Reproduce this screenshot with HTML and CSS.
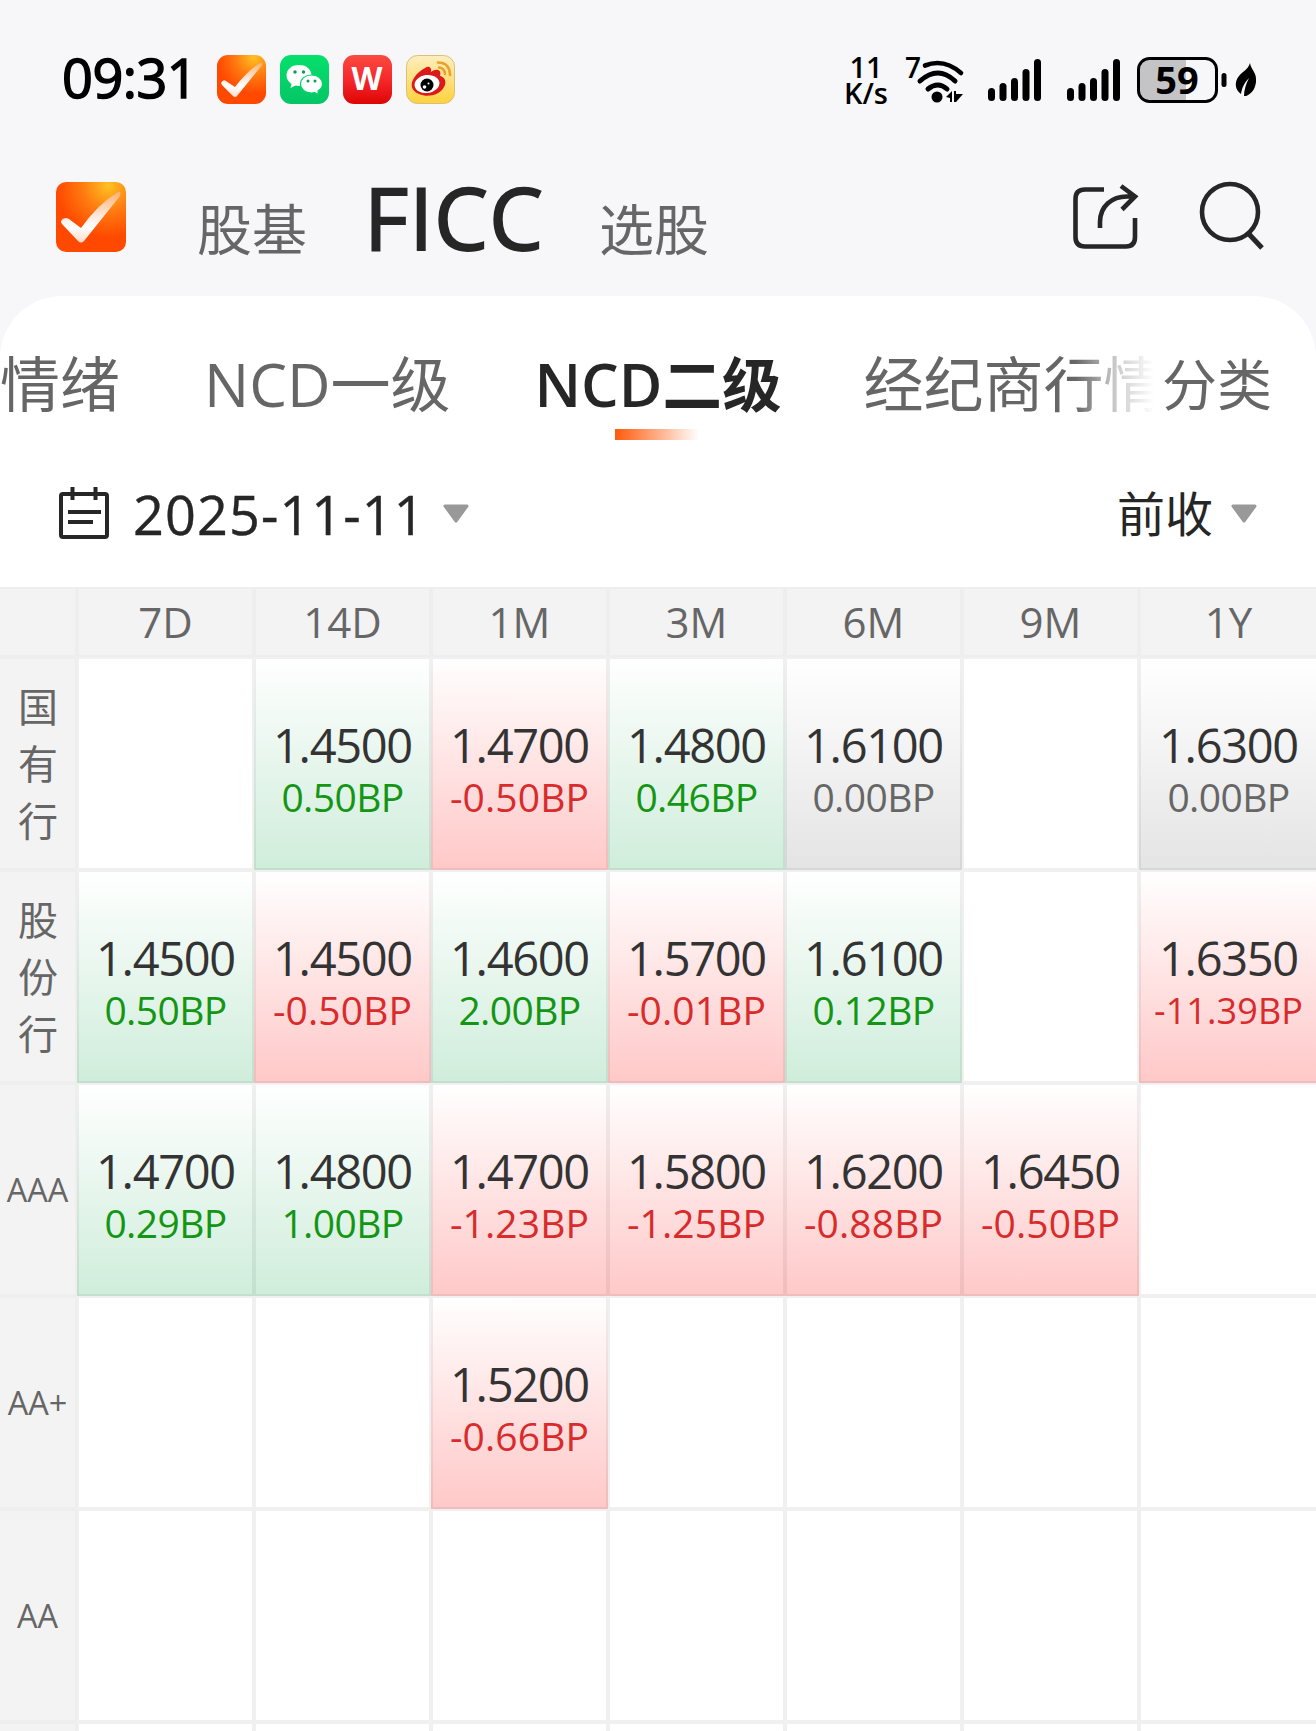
FILE: index.html
```html
<!DOCTYPE html>
<html lang="zh-CN">
<head>
<meta charset="utf-8">
<title>FICC</title>
<link rel="stylesheet" href="styles.css">
</head>
<body>

<svg class="defs" width="0" height="0">
	<defs>
		<radialGradient id="orange" cx="0.75" cy="0.05" r="0.75">
			<stop offset="0" stop-color="#ffc122"/>
			<stop offset="0.5" stop-color="#ff7a10"/>
			<stop offset="1" stop-color="#ff4800"/>
		</radialGradient>
		<linearGradient id="tick" x1="0" y1="0" x2="0" y2="1">
			<stop offset="0" stop-color="#ffb070"/>
			<stop offset="0.45" stop-color="#ffe6d8"/>
			<stop offset="0.7" stop-color="#ffffff"/>
			<stop offset="1" stop-color="#ffd9c8"/>
		</linearGradient>
		<linearGradient id="red" x1="0" y1="0" x2="0" y2="1">
			<stop offset="0" stop-color="#fb4a42"/>
			<stop offset="0.5" stop-color="#f6282c"/>
			<stop offset="1" stop-color="#dd0505"/>
		</linearGradient>
		<linearGradient id="green" x1="0" y1="0" x2="0" y2="1">
			<stop offset="0" stop-color="#06e06c"/>
			<stop offset="1" stop-color="#05c566"/>
		</linearGradient>
		<linearGradient id="yellow" x1="0" y1="0" x2="0" y2="1">
			<stop offset="0" stop-color="#fdeec0"/>
			<stop offset="1" stop-color="#ffd23c"/>
		</linearGradient>
		<symbol id="logo" viewBox="0 0 70 70">
			<rect width="70" height="70" rx="10" fill="url(#orange)"/>
			<path d="M5 39 Q8 34 13 37 L25 46 Q42 22 62 10 Q65 9 64 14 L28 59 Q25 62 22 59 L6 42 Q5 41 5 39 Z" fill="url(#tick)"/>
		</symbol>
		<symbol id="bars" viewBox="0 0 54 42">
			<rect x="0" y="29" width="7" height="13" rx="3.5"/>
			<rect x="11.5" y="24" width="7" height="18" rx="3.5"/>
			<rect x="23" y="19" width="7" height="23" rx="3.5"/>
			<rect x="34.5" y="10" width="7" height="32" rx="3.5"/>
			<rect x="46" y="0" width="7" height="42" rx="3.5"/>
		</symbol>
	</defs>
</svg>

<div class="status">
	<span class="time">09:31</span>
	<div class="apps">
		<svg width="49" height="49" viewBox="0 0 49 49">
			<rect width="49" height="49" rx="11" fill="url(#orange)"/>
			<path d="M4 28 Q6 24 9 26 L18 32 Q30 16 43 8 Q46 7 45 10 L20 41 Q18 43 16 41 L5 30 Z" fill="url(#tick)"/>
		</svg>
		<svg width="49" height="49" viewBox="0 0 49 49">
			<rect width="49" height="49" rx="11" fill="url(#green)"/>
			<path d="M19 10 C11 10 6.500 15 6.500 20.500 C6.500 24 8.500 27 11.500 29 L10.500 33 L15.500 30.500 L19 31 C27 31 31.500 26 31.500 20.500 C31.500 15 27 10 19 10 Z" fill="#fff"/>
			<path d="M31.500 20 C25 20 20.500 24 20.500 29 C20.500 34 25 38 31.500 38 L34.500 37.500 L38.500 39.500 L38 36 C41 34 42.500 32 42.500 29 C42.500 24 38 20 31.500 20 Z" fill="#fff" stroke="#05d069" stroke-width="1.200"/>
			<g fill="#0a9c52"><circle cx="15" cy="17" r="1.700"/><circle cx="23.500" cy="17" r="1.700"/><circle cx="28" cy="26" r="1.500"/><circle cx="35" cy="26" r="1.500"/></g>
		</svg>
		<svg width="49" height="49" viewBox="0 0 49 49">
			<rect width="49" height="49" rx="11" fill="url(#red)"/>
			<text class="wps" x="24" y="35" text-anchor="middle">W</text>
		</svg>
		<svg width="49" height="49" viewBox="0 0 49 49">
			<rect x="0.500" y="0.500" width="48" height="48" rx="11" fill="url(#yellow)" stroke="#d9c078"/>
			<path d="M19 13 C23 10 26 13 25 17 C30 13 36 14 34 21 C39 22 41 27 38 32 C34 40 22 43 13 39 C5 36 4 29 8 23 C11 18 15 15 19 13 Z" fill="#dc1a1c"/>
			<ellipse cx="21" cy="29" rx="12.500" ry="9" fill="#fff" transform="rotate(-8 21 29)"/>
			<circle cx="21" cy="30" r="6.500"/>
			<circle cx="18.500" cy="32" r="1.800" fill="#fff"/><circle cx="22.500" cy="28.500" r="1" fill="#fff"/>
			<path d="M33 12.500 Q38.500 13 39 19 M32 7.500 Q43.500 7.500 44 20" fill="none" stroke="#e9a12f" stroke-width="2.600" stroke-linecap="round"/>
		</svg>
	</div>
	<div class="signals">
		<div class="speed"><span>11</span><span>K/s</span></div>
		<svg class="wifi" width="60" height="48" viewBox="0 0 60 48">
			<text class="gen" x="-1" y="22">7</text>
			<g fill="none" stroke="#000" stroke-width="5">
				<path d="M19 9.500 Q38 2 55 17" stroke-linecap="round" stroke-width="4.600"/>
				<path d="M14 25 Q32 9 49 25" stroke-linecap="round"/>
				<path d="M22 33 Q32 25 41 33" stroke-linecap="round"/>
			</g>
			<circle cx="31" cy="41" r="5.500"/>
			<path d="M40 41 L46 35 L46 46 L44 46 L44 42 Z M48 35 L50 35 L50 38 L57 38 L50 46 L48 46 Z"/>
		</svg>
		<svg class="cell-a" width="54" height="42"><use href="#bars"/></svg>
		<svg class="cell-b" width="54" height="42"><use href="#bars"/></svg>
		<svg class="battery" width="90" height="46" viewBox="0 0 90 46">
			<path d="M49 3 H14 Q3 3 3 14 V32 Q3 43 14 43 H49 Z" fill="#c4c4c6"/>
			<rect x="1.500" y="1.500" width="78" height="43" rx="11" fill="none" stroke="#000" stroke-width="3"/>
			<rect x="84.500" y="16" width="5" height="14" rx="2.500"/>
			<text class="level" x="40" y="37" text-anchor="middle">59</text>
		</svg>
		<svg class="leaf" width="22" height="36" viewBox="0 0 22 36">
			<path d="M15 1 C16 8 22 10 21 20 C20 28 16 32 11 34 L9 34 C9 28 11 22 14 16 C9 21 7 26 6 32 C0 28 -1 20 4 14 C8 9 13 8 15 1 Z"/>
		</svg>
	</div>
</div>

<div class="header">
	<svg class="logo" width="70" height="70"><use href="#logo"/></svg>
	<div class="nav">
		<span class="nav-item">股基</span>
		<span class="nav-item current">FICC</span>
		<span class="nav-item">选股</span>
	</div>
	<svg class="share" width="66" height="66" viewBox="0 0 66 66" fill="none" stroke="#262626" stroke-width="4.600">
		<path d="M31 5.500 H12 Q2.500 5.500 2.500 15 V53 Q2.500 62.500 12 62.500 H53 Q62 62.500 62 53 V34"/>
		<path d="M27 44 V38 C27 22 39 12.500 54 12.500 H61 M48 2 L62 12.500 L49 25.500"/>
	</svg>
	<svg class="search" width="66" height="70" viewBox="0 0 66 70" fill="none" stroke="#262626" stroke-width="4.600">
		<circle cx="31" cy="31" r="28"/>
		<path d="M49 52 L63 67" stroke-width="5"/>
	</svg>
</div>

<div class="panel">
	<div class="tabs">
		<div class="scroller">
			<span class="tab">情绪</span>
			<span class="tab">NCD一级</span>
			<span class="tab active">NCD二级</span>
			<span class="tab">经纪商行情</span>
		</div>
		<span class="more">分类</span>
	</div>

	<div class="filter">
		<svg width="50" height="52" viewBox="0 0 50 52" fill="none" stroke="#262626" stroke-width="4">
			<rect x="2" y="7" width="46" height="43" rx="2"/>
			<path d="M13.500 0 V13 M36.500 0 V13 M9 25 H42 M9 35 H34"/>
		</svg>
		<span class="date">2025-11-11</span>
		<svg class="arrow" width="28" height="20" viewBox="0 0 28 20"><path d="M3 2 H25 L14 17 Z"/></svg>
		<span class="base">前收</span>
		<svg class="arrow" width="28" height="20" viewBox="0 0 28 20"><path d="M3 2 H25 L14 17 Z"/></svg>
	</div>

	<div class="grid">
		<div class="th"></div>
		<div class="th">7D</div>
		<div class="th">14D</div>
		<div class="th">1M</div>
		<div class="th">3M</div>
		<div class="th">6M</div>
		<div class="th">9M</div>
		<div class="th">1Y</div>

		<div class="name cn">国有行</div>
		<div class="td"></div>
		<div class="td up"><b>1.4500</b><i>0.50BP</i></div>
		<div class="td down"><b>1.4700</b><i>-0.50BP</i></div>
		<div class="td up"><b>1.4800</b><i>0.46BP</i></div>
		<div class="td flat"><b>1.6100</b><i>0.00BP</i></div>
		<div class="td"></div>
		<div class="td flat"><b>1.6300</b><i>0.00BP</i></div>

		<div class="name cn">股份行</div>
		<div class="td up"><b>1.4500</b><i>0.50BP</i></div>
		<div class="td down"><b>1.4500</b><i>-0.50BP</i></div>
		<div class="td up"><b>1.4600</b><i>2.00BP</i></div>
		<div class="td down"><b>1.5700</b><i>-0.01BP</i></div>
		<div class="td up"><b>1.6100</b><i>0.12BP</i></div>
		<div class="td"></div>
		<div class="td down"><b>1.6350</b><i class="long">-11.39BP</i></div>

		<div class="name">AAA</div>
		<div class="td up"><b>1.4700</b><i>0.29BP</i></div>
		<div class="td up"><b>1.4800</b><i>1.00BP</i></div>
		<div class="td down"><b>1.4700</b><i>-1.23BP</i></div>
		<div class="td down"><b>1.5800</b><i>-1.25BP</i></div>
		<div class="td down"><b>1.6200</b><i>-0.88BP</i></div>
		<div class="td down"><b>1.6450</b><i>-0.50BP</i></div>
		<div class="td"></div>

		<div class="name">AA+</div>
		<div class="td"></div>
		<div class="td"></div>
		<div class="td down"><b>1.5200</b><i>-0.66BP</i></div>
		<div class="td"></div>
		<div class="td"></div>
		<div class="td"></div>
		<div class="td"></div>

		<div class="name">AA</div>
		<div class="td"></div>
		<div class="td"></div>
		<div class="td"></div>
		<div class="td"></div>
		<div class="td"></div>
		<div class="td"></div>
		<div class="td"></div>

		<div class="name"></div>
		<div class="td"></div>
		<div class="td"></div>
		<div class="td"></div>
		<div class="td"></div>
		<div class="td"></div>
		<div class="td"></div>
		<div class="td"></div>
	</div>
</div>

</body>
</html>
```
FILE: styles.css
```css
* {
	box-sizing: border-box;
}

body {
	margin: 0;
	width: 1316px;
	height: 1731px;
	overflow: hidden;
	background: #f7f7fa;
	color: #262626;
	font-family: "Open Sans", "Noto Sans CJK SC", sans-serif;
	white-space: nowrap;
}

svg {
	display: block;
	flex: none;
	overflow: visible;
}

.defs {
	position: absolute;
}

/* status bar */

.status {
	display: flex;
	align-items: center;
	height: 159px;
	padding-left: 62px;
	color: #000;
}

.time {
	width: 155px;
	font-size: 54px;
	line-height: 80px;
	letter-spacing: -0.5px;
	margin-top: -5px;
	-webkit-text-stroke: 1.5px #000;
}

.apps {
	display: flex;
	gap: 14px;
}

.wps {
	font-family: "Open Sans", sans-serif;
	font-size: 32px;
	font-weight: 700;
	fill: #fff;
}

.signals {
	display: flex;
	align-items: center;
	margin-left: 388px;
}

.speed {
	display: flex;
	flex-direction: column;
	align-items: center;
	width: 46px;
	font-size: 29px;
	font-weight: 600;
	line-height: 26px;
}

.wifi {
	margin-left: 17px;
}

.gen {
	font-size: 28px;
	font-weight: 600;
}

.cell-a {
	margin-left: 22px;
}

.cell-b {
	margin-left: 25px;
}

.battery {
	margin-left: 16px;
}

.level {
	font-size: 38px;
	font-weight: 700;
}

.leaf {
	margin-left: 8px;
}

/* app header */

.header {
	display: flex;
	align-items: center;
	height: 137px;
	padding: 0 51px 21px 56px;
}

.nav {
	display: flex;
	align-items: baseline;
	flex: 1;
	margin: 12px 0 0 71px;
}

.nav-item {
	font-size: 55px;
	line-height: 116px;
	color: #666;
}

.current {
	width: 175px;
	margin: 0 60px 0 57px;
	font-size: 86px;
	letter-spacing: 0.8px;
	color: #262626;
	-webkit-text-stroke: 1.8px #262626;
}

.search {
	margin: -3px 0 0 60px;
}

/* white sheet */

.panel {
	height: 1435px;
	padding-top: 38px;
	background: #fff;
	border-radius: 62px 62px 0 0;
}

.tabs {
	display: flex;
	height: 106px;
	line-height: 100px;
	color: #666;
}

.scroller {
	display: flex;
	width: 1156px;
	overflow: hidden;
	font-size: 60px;
	-webkit-mask-image: linear-gradient(90deg, #000 1075px, rgba(0, 0, 0, 0.35) 1115px, transparent 1154px);
	mask-image: linear-gradient(90deg, #000 1075px, rgba(0, 0, 0, 0.35) 1115px, transparent 1154px);
}

.tab {
	position: relative;
	flex: none;
	margin-right: 84px;
}

.active {
	margin-right: 82px;
	font-size: 59.500px;
	font-weight: 600;
	color: #262626;
}

.active::after {
	content: "";
	position: absolute;
	left: 50%;
	margin-left: -43px;
	top: 95px;
	width: 84px;
	height: 11px;
	background: linear-gradient(90deg, #ff5a0a, rgba(255, 90, 10, 0));
}

.more {
	margin-left: 6px;
	font-size: 55px;
}

.filter {
	display: flex;
	align-items: center;
	height: 147px;
	padding: 0 58px 0 59px;
}

.filter svg:first-child {
	margin-top: -2px;
}

.date {
	margin-left: 24px;
	font-size: 54px;
	line-height: 80px;
	letter-spacing: 1.1px;
	-webkit-text-stroke: 0.4px #262626;
}

.arrow {
	margin-left: 16px;
	fill: #999;
	stroke: #999;
	stroke-width: 3;
	stroke-linejoin: round;
}

.base {
	margin-left: auto;
	font-size: 48px;
	line-height: 80px;
}

.base + .arrow {
	margin-left: 17px;
}

/* rate matrix */

.grid {
	display: grid;
	grid-template-columns: 77px repeat(7, 177px);
	grid-template-rows: 70px;
	grid-auto-rows: 213px;
	height: 1144px;
	overflow: hidden;
}

.th,
.name,
.td {
	border: 2px solid rgba(0, 0, 0, 0.06);
}

.th,
.name {
	display: flex;
	align-items: center;
	justify-content: center;
	background: #f3f3f3;
	border-color: #eee;
	color: #666;
}

.grid > :nth-child(8n + 1) {
	border-left: 0;
}

.grid > :nth-child(8n) {
	border-right: 0;
}

.th {
	font-size: 42px;
	line-height: 60px;
}

.name {
	font-size: 32.500px;
}

.cn {
	padding: 0 17px 0 18px;
	font-size: 40px;
	line-height: 57px;
	white-space: normal;
	word-break: break-all;
}

.td {
	display: flex;
	flex-direction: column;
	align-items: center;
	padding-top: 60px;
	background-origin: border-box;
}

.td b {
	font-size: 47px;
	font-weight: 400;
	line-height: 52px;
	letter-spacing: -1.300px;
	color: #333;
}

.td i {
	font-size: 39px;
	font-style: normal;
	line-height: 51px;
	letter-spacing: -0.6px;
}

.up {
	background-image: linear-gradient(#fff, #cfeddb);
}

.up i {
	color: #149614;
}

.down {
	background-image: linear-gradient(#fff, #ffc8c8);
}

.td.down i {
	color: #d92b2b;
	letter-spacing: 0.1px;
}

.flat {
	background-image: linear-gradient(#fff, #e4e4e4);
}

.flat i {
	color: #666;
}

.td .long {
	font-size: 36px;
	line-height: 53px;
}
```
